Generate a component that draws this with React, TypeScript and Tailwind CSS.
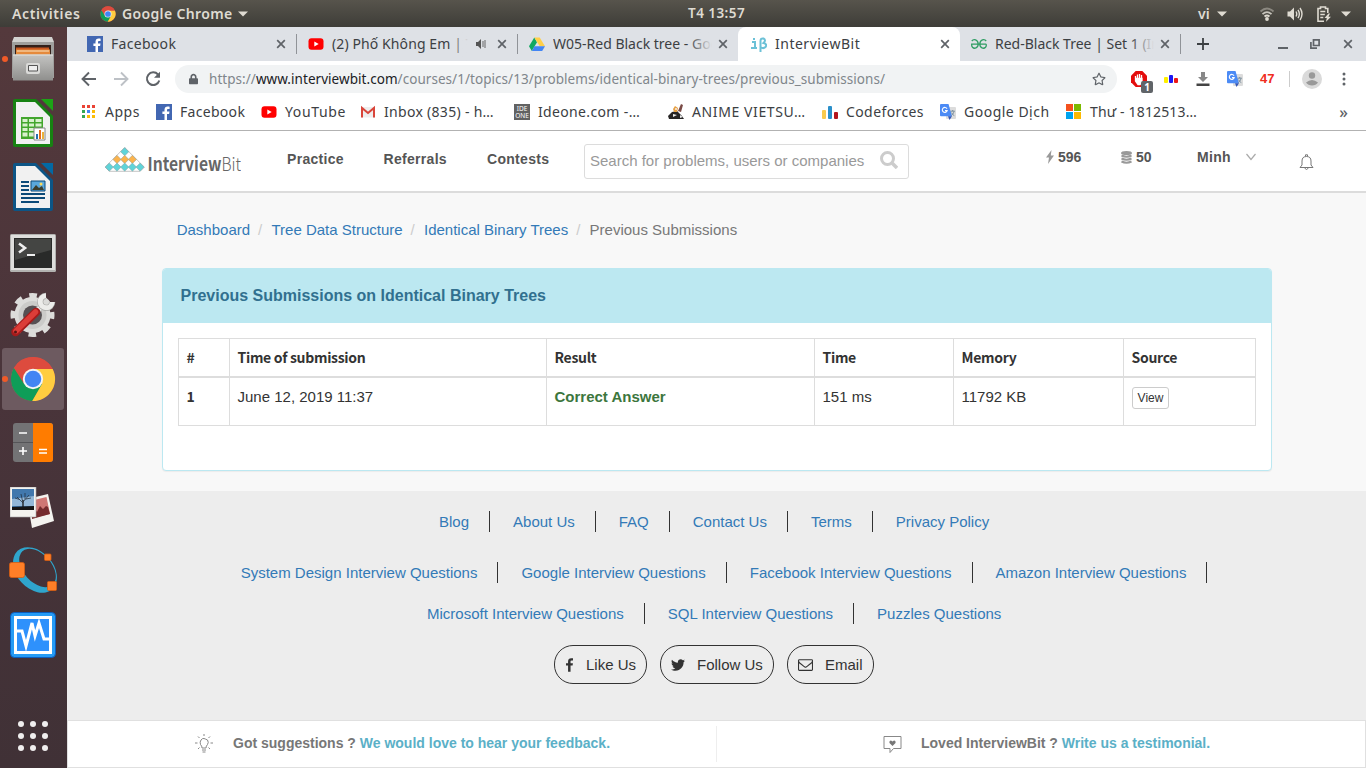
import React from "react";
import { FaTwitter, FaRegStar, FaLock } from "react-icons/fa";

const ui = "font-['Noto_Sans','Open_Sans',sans-serif]";

function Chrome({ className }: { className: string }) {
  return (
    <svg viewBox="0 0 48 48" className={className}>
      <circle cx="24" cy="24" r="23" fill="#dd4b3e" />
      <path d="M24 24 L4.1 12.5 A23 23 0 0 0 23.2 47 L34 29.5 Z" fill="#0f9d58" />
      <path d="M24 13.5 L44.5 13.5 A23 23 0 0 1 23.2 47 L33.5 29 Z" fill="#ffcd40" />
      <path d="M4.1 12.5 L14.6 29 L15 19 L24 13.5 L44.4 13.5 A23 23 0 0 0 4.1 12.5Z" fill="#dd4b3e" />
      <circle cx="24" cy="24" r="10.6" fill="#f4f4f4" />
      <circle cx="24" cy="24" r="8.6" fill="#4285f4" />
    </svg>
  );
}

function Facebook() {
  return (
    <svg viewBox="0 0 16 16" className="size-4 shrink-0">
      <path d="M0 0H16V16H0Z" fill="#4267b2" />
      <path d="M11 16V10h2.1l.4-2.4H11V6.2c0-.8.3-1.2 1.3-1.2h1.3V2.7c-.4-.1-1-.2-1.9-.2-2 0-3.2 1.2-3.2 3.3v1.8H6.4V10h2.1v6Z" fill="#fff" />
    </svg>
  );
}

function YouTube() {
  return (
    <svg viewBox="0 0 16 16" className="size-4 shrink-0">
      <rect x="0.5" y="2.2" width="15" height="11.6" rx="3" fill="#f00" />
      <path d="M6.3 5.5v5L10.7 8Z" fill="#fff" />
    </svg>
  );
}

function Drive() {
  return (
    <svg viewBox="0 0 16 16" className="size-4 shrink-0">
      <path d="M5.3 1.5 0 10.3 2.8 15 8 6.2Z" fill="#11a861" />
      <path d="M5.3 1.5h5.4L16 10.3h-5.3Z" fill="#ffcf48" />
      <path d="M5.5 10.3H16L13.2 15H2.8Z" fill="#4285f4" />
    </svg>
  );
}

function Geeks() {
  return (
    <svg viewBox="0 0 16 16" className="size-4 shrink-0" fill="none" stroke="#2f9d63" strokeWidth="1.3">
      <path d="M.8 5C2.500 2.800 7 3.300 7.200 8c0 4.300-4 5.100-5.700 3.300-.9-1-.9-2-.8-3.100H15.300M15.200 5C13.500 2.800 9 3.300 8.800 8c0 4.300 4 5.100 5.700 3.300.9-1 .9-2 .8-3.100" />
    </svg>
  );
}

function Translate() {
  return (
    <svg viewBox="0 0 16 16" className="size-4 shrink-0">
      <rect x="6" y="3" width="10" height="12" rx="1" fill="#dcdcdc" />
      <path d="M1 0H8.500L12 12.300H1A1 1 0 0 1 0 11.300V1A1 1 0 0 1 1 0Z" fill="#4c8bf5" />
      <path d="M8 12.300h4L9.500 16Z" fill="#3357b8" />
      <path d="M7 4.700A2.500 2.500 0 1 0 7.200 6.600H5" fill="none" stroke="#fff" strokeWidth="1.100" />
      <path d="M10.600 7.200h4.200M12.700 6v1M14 7.500c-.5 2-1.500 3-2.600 4M11.700 8.600c.6 1.500 1.500 2.500 2.600 3" fill="none" stroke="#6e8494" strokeWidth=".9" />
    </svg>
  );
}

function Cross({ className = "text-[#5f6368]" }: { className?: string }) {
  return (
    <svg viewBox="0 0 10 10" className={`size-[10px] shrink-0 ${className}`}>
      <path d="M1.200 1.200 8.800 8.800M8.800 1.200 1.200 8.800" stroke="currentColor" strokeWidth="1.700" />
    </svg>
  );
}

function Caret() {
  return (
    <svg viewBox="0 0 10 6" className="h-[6px] w-[10px] shrink-0">
      <path d="M0 .5H10L5 5.500Z" fill="#dfdbd2" />
    </svg>
  );
}

function TopBar() {
  return (
    <header className={`flex h-[27px] items-center bg-linear-to-b from-[#57544c] to-[#3e3d38] text-[14px] leading-[27px] font-semibold whitespace-nowrap text-[#dfdbd2] ${ui}`}>
      <div className="w-[100px] pl-3 tracking-[0.6px]">Activities</div>
      <Chrome className="size-4" />
      <div className="w-[122px] pl-[6px] tracking-[0.35px]">Google Chrome</div>
      <Caret />
      <div className="w-[950px] pl-[440px] text-[13.500px] tracking-[0.45px]">T4 13:57</div>
      <div className="w-[19px]">vi</div>
      <Caret />
      <svg viewBox="0 0 16 16" className="ml-8 size-4" fill="none" strokeWidth="1.800">
        <path d="M1.500 5.500Q8-.5 14.500 5.500" stroke="#8b8880" />
        <path d="M3.500 8.200Q8 4 12.500 8.200" stroke="#c8c5bd" />
        <path d="M5.500 10.500Q8 8.500 10.500 10.500" stroke="#dfdbd2" />
        <circle cx="8" cy="13" r="1.900" fill="#dfdbd2" />
      </svg>
      <svg viewBox="0 0 16 16" className="ml-[12px] size-4" fill="none" stroke="#dfdbd2" strokeWidth="1.400">
        <path d="M.5 5.500H3L7 1.500v13L3 10.500H.500Z" fill="#dfdbd2" stroke="none" />
        <path d="M9 5.500Q10.500 8 9 10.500M11 3.800Q13.700 8 11 12.200M13 2Q17 8 13 14" />
      </svg>
      <svg viewBox="0 0 16 16" className="ml-[13px] size-4" fill="none" stroke="#dfdbd2" strokeWidth="1.600">
        <path d="M11.800 7V2.500H9.500V1h-5v1.500H2v12.700h6M4.300 5.500h5M4.300 8.500h4.500M4.300 11.500h3" />
        <path d="M12.500 7.500 8.500 12h2.300l-.8 3.700 5-5h-2.500l1.500-3.200Z" fill="#dfdbd2" stroke="none" />
      </svg>
      <div className="ml-[9px]"><Caret /></div>
    </header>
  );
}

function DocIcon({ dark, light, sheet }: { dark: string; light: string; sheet?: boolean }) {
  return (
    <svg viewBox="0 0 40 48" className="h-12 w-10">
      <path d="M2 0H23L40 17V46a2 2 0 0 1-2 2H2a2 2 0 0 1-2-2V2A2 2 0 0 1 2 0Z" fill={dark} />
      <path d="M28 0H40V12Z" fill={light} />
      <path d="M3 3H22L37 18V45H3Z" fill="#f1f1f1" />
      {sheet ? (
        <>
          <path d="M8 18H30V40H8Z" fill="#43a62d" />
          <path d="M9.500 20h5v3h-5zM16 20h5v3h-5zM22.500 20h6v3h-6zM9.500 24.500h5v3h-5zM16 24.500h5v3h-5zM22.500 24.500h6v3h-6zM9.500 29h5v3h-5zM16 29h5v3h-5zM9.500 33.500h5v4h-5zM16 33.500h5v4h-5z" fill="#d8f1cd" />
          <path d="M21 29H32V41H21Z" fill="#fff" stroke="#888" />
          <path d="M23 35h2v5h-2z" fill="#2571b0" />
          <path d="M26 31h2v9h-2z" fill="#e46c1d" />
          <path d="M29 33h2v7h-2z" fill="#eab13b" />
        </>
      ) : (
        <>
          <path d="M8 18h8v2H8zM8 22h8v2H8zM8 26h8v2H8zM8 30h24v2H8zM8 34h24v2H8zM8 38h18v2H8z" fill="#0c4a78" />
          <path d="M18 18H32V28H18Z" fill="#5aa8dc" stroke="#0c4a78" />
          <path d="M19 27l4-5 3 3 3-2 2 4Z" fill="#3c3d2b" />
          <circle cx="28" cy="21" r="1.500" fill="#fcd95a" />
        </>
      )}
    </svg>
  );
}

function Slot({ children, dot, active }: { children: React.ReactNode; dot?: boolean; active?: boolean }) {
  return (
    <div className="relative flex h-16 items-center justify-center">
      {active && <div className="absolute inset-x-[2px] inset-y-[1px] rounded-[3px] bg-[#6d5a60]" />}
      {dot && <div className="absolute left-[2px] size-[6px] rounded-full bg-[#f05a28]" />}
      <div className="relative">{children}</div>
    </div>
  );
}

function Dock() {
  return (
    <aside className="flex h-[741px] w-[67px] shrink-0 flex-col bg-linear-to-b from-[#54393c] via-[#49343a] to-[#403136] pr-px">
      <Slot dot>
        <svg viewBox="0 0 42 44" className="h-11 w-[42px]">
          <defs>
            <linearGradient id="drawer" x1="0" y1="0" x2="0" y2="1"><stop offset="0" stopColor="#c4c4c2" /><stop offset="1" stopColor="#8f8f8d" /></linearGradient>
          </defs>
          <path d="M2 0H40L42 5V40H0V5Z" fill="#d2d2d0" />
          <path d="M0 5H42V41H0Z" fill="#9f9f9d" />
          <path d="M3 8H39V19H3Z" fill="#33201a" />
          <path d="M4 10.500H37V18H4Z" fill="#c9571f" />
          <path d="M4 12.500H38V18H4Z" fill="#e58a3c" />
          <path d="M5 14H37" stroke="#fbe3c0" strokeWidth="1" />
          <path d="M1 17.500H41V43.500H1Z" fill="url(#drawer)" />
          <path d="M1 18H41" stroke="#e2e2e0" />
          <rect x="14" y="26" width="14" height="11" rx="2" fill="#dadad8" />
          <path d="M16.500 28.500H25.500V34H16.500Z" fill="#eee" stroke="#555" />
        </svg>
      </Slot>
      <Slot><DocIcon dark="#178212" light="#1da316" sheet /></Slot>
      <Slot><DocIcon dark="#0c5586" light="#0369a3" /></Slot>
      <Slot>
        <svg viewBox="0 0 46 38" className="mt-1 h-[38px] w-[46px]">
          <rect width="46" height="38" rx="1.500" fill="#b2b2b0" />
          <path d="M1 1H45V36H1Z" fill="#dededc" />
          <path d="M4 4H42V34H4Z" fill="#292a29" />
          <path d="M5 5H41V16L5 26Z" fill="#444543" />
          <path d="M9 9.500 15 14 9 18.500" fill="none" stroke="#eee" strokeWidth="2.600" />
          <path d="M17 21h8" stroke="#eee" strokeWidth="2" />
        </svg>
      </Slot>
      <Slot>
        <svg viewBox="0 0 46 46" className="size-[46px]">
          <circle cx="22.500" cy="23" r="18" fill="#dcdcda" />
          <circle cx="22.500" cy="23" r="19" fill="none" stroke="#dcdcda" strokeWidth="6" strokeDasharray="7.460 7.460" strokeDashoffset="3.730" />
          <circle cx="22.500" cy="23" r="14" fill="#cbcbc9" />
          <circle cx="22.500" cy="23" r="9.500" fill="#565053" />
          <path d="M24 22 33 13" stroke="#c2c2c0" strokeWidth="6" />
          <path d="M24 22 33 13" stroke="#ececea" strokeWidth="4.500" />
          <path d="M36 3.800A6 6 0 1 0 42.200 10" fill="none" stroke="#a5a5a3" strokeWidth="6.200" />
          <path d="M36 3.800A6 6 0 1 0 42.200 10" fill="none" stroke="#ececea" strokeWidth="5" />
          <path d="M5.500 40 26 20" stroke="#a61b1b" strokeWidth="8.500" strokeLinecap="round" />
          <path d="M6 39 25.500 20" stroke="#dc3d38" strokeWidth="5.500" strokeLinecap="round" />
          <circle cx="5.500" cy="40" r="1.500" fill="#551414" />
        </svg>
      </Slot>
      <Slot active dot><Chrome className="size-[46px]" /></Slot>
      <Slot>
        <svg viewBox="0 0 40 40" className="size-10">
          <rect width="40" height="39" rx="3" fill="#737375" />
          <path d="M20 0H37a3 3 0 0 1 3 3V36a3 3 0 0 1-3 3H20Z" fill="#ff7c00" />
          <path d="M0 19.500H20" stroke="#555558" />
          <path d="M6 10h8M6 28h8M10 24v8M26 26.500h8M26 30h8" stroke="#fff" strokeWidth="1.600" />
        </svg>
      </Slot>
      <Slot>
        <svg viewBox="0 0 46 42" className="mt-[2px] h-[42px] w-[46px]">
          <path d="M17 12 38 7 44 34 22 41Z" fill="#f4f3ef" />
          <path d="M20 14 36.500 10 40 27 23 31Z" fill="#cf7774" />
          <path d="M22 26l3-4 2 3 3-6 3 3 3-3 2 1 2 7-18 5Z" fill="#752b2d" />
          <path d="M0 0H26V30H0Z" fill="#f4f3ef" stroke="#aaa" strokeWidth=".6" />
          <path d="M2 2H24V23H2Z" fill="#4178ad" />
          <path d="M2 12 24 9V19H2Z" fill="#93b8d8" />
          <path d="M2 20 24 19V23H2Z" fill="#151515" />
          <path d="M13 21V13" stroke="#181818" strokeWidth="1.300" />
          <path d="M13 16 7 10M13 15 19 8M12.500 14 11 7M9.500 12.500 5 11M16 12 21 11M15 12.500 15 6" stroke="#1f2a36" strokeWidth=".7" fill="none" />
        </svg>
      </Slot>
      <Slot>
        <svg viewBox="0 0 48 50" className="h-[50px] w-12">
          <path fillRule="evenodd" d="M8.600 4.700A26 19 48 0 1 43.400 43.300 26 19 48 0 1 8.600 4.700ZM13.400 5.300A22.500 14 48 0 1 43.600 38.700 22.500 14 48 0 1 13.400 5.300Z" fill="#2fa5cc" />
          <g fill="#ff7f27" stroke="#d75d12" strokeWidth=".8">
            <rect x=".5" y="16.500" width="15" height="15" rx="2" />
            <rect x="35.500" y="8" width="6.500" height="6.500" rx="1" />
            <rect x="38.500" y="35.500" width="9" height="9" rx="1" />
          </g>
        </svg>
      </Slot>
      <Slot>
        <svg viewBox="0 0 46 46" className="size-[46px]">
          <rect x=".5" y=".5" width="45" height="45" rx="4" fill="#259bf5" stroke="#0b5cbc" />
          <path d="M5.500 5.500H40.500V40.500H5.500Z" fill="#2e91fc" stroke="#fff" strokeWidth="3" />
          <path d="M7 19H12L16 34 22 11 25 24 29 11 34 27H39" fill="none" stroke="#fff" strokeWidth="3" />
        </svg>
      </Slot>
      <div className="mt-auto">
        <Slot>
          <div className="grid grid-cols-3 gap-[6px]">
            {Array.from({ length: 9 }, (_, i) => <div key={i} className="size-[6px] rounded-full bg-[#f0eeee]" />)}
          </div>
        </Slot>
      </div>
    </aside>
  );
}

function Tab({ icon, title, text, sep, sound, fade }: { icon: React.ReactNode; title: string; text: string; sep?: boolean; sound?: boolean; fade?: boolean }) {
  return (
    <div className="flex h-[34px] w-[221px] shrink-0 items-center pl-3">
      {icon}
      <div className={`relative ml-2 shrink-0 overflow-hidden ${sound ? "w-[136px]" : "w-[159px]"}`}>
        <span className={text}>{title}</span>
        {fade && <div className={`absolute inset-y-0 right-0 bg-linear-to-r from-transparent to-[#dee1e6] ${sound ? "w-4" : "w-6"}`} />}
      </div>
      {sound && <svg viewBox="0 0 10 10" className="mr-[5px] ml-[8px] size-[10px] shrink-0"><path d="M0 3h2l3-3v10L2 7H0Z" fill="#555" /><path d="M7 2v6M9 1v8" stroke="#666" /></svg>}
      <div className="flex w-[27px] shrink-0 items-center justify-between pl-[6px]">
        <Cross />
        {sep && <div className="h-5 w-px bg-[#909398]" />}
      </div>
    </div>
  );
}

function TabStrip() {
  return (
    <div className="flex h-[34px] items-center bg-[#dee1e6] pl-2 text-[14px] leading-[34px] whitespace-nowrap text-[#3c4043]">
      <Tab icon={<Facebook />} title="Facebook" text="tracking-[0.3px]" sep />
      <Tab icon={<YouTube />} title="(2) Phố Không Em | Thái" text="tracking-[0.1px]" sep sound fade />
      <Tab icon={<Drive />} title="W05-Red Black tree - Google" text="tracking-[0px]" fade />
      <div className="relative h-full w-[222px] rounded-t-lg bg-white pl-px">
        <Tab icon={<svg viewBox="0 0 16 16" className="size-4 shrink-0" fill="none" stroke="#6cc1d7" strokeWidth="2"><path d="M1 6h3v5.500M0 12h6M3 2v2M9.500 16V5q0-3 3-2.500 3 1.500 0 4.500 4 1 2 4-2 2-4.500.5" /></svg>} title="InterviewBit" text="tracking-[0.5px]" />
      </div>
      <div className="-ml-px"><Tab icon={<Geeks />} title="Red-Black Tree | Set 1 (Introduction)" text="tracking-[0px]" sep fade /></div>
      <svg viewBox="0 0 12 12" className="ml-[17px] size-3"><path d="M6 0V12M0 6H12" stroke="#3c4043" strokeWidth="1.800" /></svg>
      <div className="ml-auto flex items-center pr-[13px] text-[#5f6368]">
        <div className="mt-[8px] h-[2px] w-[10px] bg-[#5f6368]" />
        <svg viewBox="0 0 10 10" className="ml-[22px] size-[10px]" fill="none" stroke="currentColor" strokeWidth="1.700"><path d="M3.500.900H9.100V6.500H3.500ZM.900 3V9.100H7" /></svg>
        <Cross className="ml-[23px] text-[#5f6368]" />
      </div>
    </div>
  );
}

function Toolbar() {
  return (
    <div className="flex h-[35px] items-center pl-[14px]">
      <svg viewBox="0 0 16 16" className="size-4" fill="none" stroke="#5f6368" strokeWidth="1.900"><path d="M15 8H2M8 1.500 1.500 8 8 14.500" /></svg>
      <svg viewBox="0 0 16 16" className="ml-4 size-4" fill="none" stroke="#bdc1c6" strokeWidth="1.900"><path d="M1 8H14M8 1.500 14.500 8 8 14.500" /></svg>
      <svg viewBox="0 0 16 16" className="ml-4 size-4" fill="none" stroke="#5f6368" strokeWidth="2"><path d="M13 3.500A6.300 6.300 0 1 0 14.300 9.500" /><path d="M9 6.800H15V.800Z" fill="#5f6368" stroke="none" /></svg>
      <div className="ml-[14px] flex h-7 w-[942px] items-center rounded-full bg-[#f1f3f4] pr-[11px] pl-[14px] text-[13.500px] leading-7 whitespace-nowrap text-[#80868b]">
        <FaLock className="mr-[11px] h-3 w-[9px] text-[#5f6368]" />
        <span className="tracking-[0.05px]">https://<span className="text-[#202124]">www.interviewbit.com</span>/courses/1/topics/13/problems/identical-binary-trees/previous_submissions/</span>
        <FaRegStar className="ml-auto size-[14px] text-[#5f6368]" />
      </div>
      <div className="relative ml-[14px] size-4">
        <svg viewBox="0 0 16 16" className="size-4"><path d="M4.700 0h6.600L16 4.700v6.600L11.300 16H4.700L0 11.300V4.700Z" fill="#e40d0d" /><path d="M4.500 8V5M6.500 8V3.500M8.500 8V3M10.500 8V4M4.500 7.500H11V11L9 13.500H7L4.500 10Z" stroke="#fff" strokeWidth="1.300" fill="#fff" /></svg>
        <div className="absolute top-[10px] left-[10px] flex h-3 w-3 items-center justify-center rounded-[2px] bg-[#606468] text-[10px] leading-3 font-bold text-white">1</div>
      </div>
      <svg viewBox="0 0 16 16" className="ml-4 size-4"><rect x="1" y="6" width="4" height="6" rx="1" fill="#fff000" /><rect x="6" y="4" width="4" height="8" rx="1" fill="#1b18f5" /><rect x="11" y="7" width="4" height="5" rx="1" fill="#ed1818" /></svg>
      <svg viewBox="0 0 16 16" className="ml-4 size-4"><path d="M6 1h4v5h3L8 11 3 6h3Z" fill="#888" /><path d="M1.500 12.500h13v2.500h-13Z" fill="#444" /></svg>
      <div className="ml-4"><Translate /></div>
      <div className="ml-[17px] w-[15px] font-['Liberation_Sans',sans-serif] text-[13px] leading-none font-bold text-[#f02d20]">47</div>
      <div className="ml-[14px] h-4 w-px bg-[#ccc]" />
      <svg viewBox="0 0 20 20" className="ml-[12px] size-5"><circle cx="10" cy="10" r="10" fill="#dadada" /><circle cx="10" cy="6.500" r="3.200" fill="#999" /><path d="M4 13.500q6-5 12 0-2 3-6 3t-6-3Z" fill="#999" /></svg>
      <svg viewBox="0 0 4 16" className="ml-[20px] h-4 w-1" fill="#5f6368"><circle cx="2" cy="3" r="1.500" /><circle cx="2" cy="8" r="1.500" /><circle cx="2" cy="13" r="1.500" /></svg>
    </div>
  );
}

function Mark({ w, icon, children, text = "" }: { w: string; icon: React.ReactNode; children: string; text?: string }) {
  return (
    <div className={`flex shrink-0 items-center ${w}`}>
      <div className="flex size-4 shrink-0 items-center justify-center">{icon}</div>
      <span className={`ml-2 ${text}`}>{children}</span>
    </div>
  );
}

const dots = ["#ea4335", "#ea4335", "#ea4335", "#34a853", "#4285f4", "#fbbc05", "#34a853", "#fbbc05", "#fbbc05"];

function Bookmarks() {
  return (
    <div className="flex h-[35px] items-center border-b border-[#b2b2b2] pb-[3px] pl-[14px] text-[14px] leading-none whitespace-nowrap text-[#3c4043]">
      <Mark w="w-[75px]" text="tracking-[0.5px]" icon={<svg viewBox="0 0 14 14" className="size-[14px]">{dots.map((c, i) => <rect key={i} x={(i % 3) * 5} y={Math.floor(i / 3) * 5} width="3" height="3" fill={c} />)}</svg>}>Apps</Mark>
      <Mark w="w-[105px]" icon={<Facebook />} text="tracking-[0.3px]">Facebook</Mark>
      <Mark w="w-[99px]" icon={<YouTube />} text="tracking-[0.65px]">YouTube</Mark>
      <Mark w="w-[154px]" text="tracking-[0.3px]" icon={<svg viewBox="0 0 16 16" className="size-4"><path d="M1 3H15V13.500H1Z" fill="#eee" /><path d="M2 13.500V4L8 9 14 4V13.500" fill="none" stroke="#d9453a" strokeWidth="2" /></svg>}>Inbox (835) - h…</Mark>
      <Mark w="w-[154px]" text="tracking-[0.35px]" icon={<div className="flex size-4 flex-col items-center justify-center overflow-hidden bg-[#626262] text-[6.500px] leading-[7px] text-white"><span>IDE</span><span>ONE</span></div>}>Ideone.com -…</Mark>
      <Mark w="w-[154px]" text="tracking-[0.6px]" icon={<svg viewBox="0 0 16 16" className="size-4"><path d="M0 12 4 8 9 7 14 12 16 15H1Z" fill="#272525" /><path d="M5 5 7 2 10 4 9 8H6Z" fill="#e5a044" /><path d="M10 7 13 0 15 1 13 8Z" fill="#7a4b46" /><path d="M5 10l4 1-4 2ZM12 11l3 2-3 1Z" fill="#eee" /><path d="M7 4h2v2H7Z" fill="#f5d9bd" /></svg>}>ANIME VIETSU…</Mark>
      <Mark w="w-[118px]" text="tracking-[0.4px]" icon={<svg viewBox="0 0 16 16" className="size-4"><rect y="6" width="4" height="9" rx="1" fill="#f8ca4d" /><rect x="6" y="2" width="4" height="13" rx="1" fill="#2a8fca" /><rect x="12" y="8" width="4" height="7" rx="1" fill="#b3161d" /></svg>}>Codeforces</Mark>
      <Mark w="w-[125px]" text="tracking-[0.5px]" icon={<Translate />}>Google Dịch</Mark>
      <Mark w="w-[151px]" text="ml-[9px] tracking-[0.15px]" icon={<div className="grid size-[15px] grid-cols-2 gap-px"><i className="bg-[#f4511e]" /><i className="bg-[#7cb900]" /><i className="bg-[#00a3ee]" /><i className="bg-[#fdb900]" /></div>}>Thư - 1812513…</Mark>
      <span className="ml-auto pr-[18px] text-[16px] font-medium text-[#5f6368]">»</span>
    </div>
  );
}

const diamonds: [number, number, string][] = [
  [19.700, 4.700, "#5fd4d9"],
  [12, 12.400, "#fbb34c"], [19.700, 12.400, "#fbb34c"], [27.400, 12.400, "#fbb34c"],
  [4.300, 20.100, "#5fd4d9"], [12, 20.100, "#5fd4d9"], [19.700, 20.100, "#5fd4d9"], [27.400, 20.100, "#5fd4d9"], [35.100, 20.100, "#5fd4d9"],
];

function SiteHeader() {
  return (
    <div className="flex h-[62px] items-start border-b-2 border-[#dcdcdc] bg-white text-[14px] leading-4 font-bold whitespace-nowrap text-[#555]">
      <svg viewBox="0 0 136 26" className="mt-[16px] ml-[38px] h-[26px] w-[136px]">
        <path d="M19.700.500 39.300 20.100 35.100 24.300H4.300L.100 20.100Z" fill="#fff" stroke="#b5b5b5" strokeWidth=".8" />
        {diamonds.map(([x, y, c]) => <path key={`${x}-${y}`} d={`M${x} ${y - 4.100}l4.100 4.100-4.100 4.100-4.100-4.100Z`} fill={c} stroke="#8a9c9c" strokeWidth=".5" />)}
        <text x="42.500" y="23.500" fontSize="18.500" fill="#666" fontFamily="Noto Sans CJK SC, sans-serif" textLength="93.500" lengthAdjust="spacingAndGlyphs">
          <tspan fontWeight="700">Interview</tspan><tspan fontWeight="300">Bit</tspan>
        </text>
      </svg>
      <nav className="flex pt-5 pl-[46px] tracking-[0.3px]">
        <a className="w-[96.500px]">Practice</a>
        <a className="w-[103.500px]">Referrals</a>
        <a className="w-[97px]">Contests</a>
      </nav>
      <div className="mt-[13px] flex h-[35px] w-[325px] items-center rounded-[3px] border border-[#dcdcdc] pl-[5px] text-[15px] font-normal text-[#999]">
        <span className="w-[290px] pb-[2px]">Search for problems, users or companies</span>
        <svg viewBox="0 0 18 18" className="-mt-1 size-[18px]" fill="none" stroke="#ccc"><circle cx="7.500" cy="7.500" r="6" strokeWidth="3" /><path d="M12 12 17 17" strokeWidth="3.500" /></svg>
      </div>
      <div className="mt-[18px] ml-[137px] flex w-[75px] items-center">
        <svg viewBox="0 0 8 14" className="mr-1 h-[14px] w-2"><path d="M5.500 0 0 7.500h3L2 14 8 5.500H4.800Z" fill="#999" /></svg>596
      </div>
      <div className="mt-[18px] flex w-[76px] items-center">
        <svg viewBox="0 0 11 13" className="mr-1 h-[13px] w-[11px]" fill="none" stroke="#999" strokeWidth="2"><ellipse cx="5.500" cy="2" rx="4.500" ry="1" /><path d="M.5 4.500q5 2.500 10 0M.5 7.500q5 2.500 10 0M.5 10.500q5 2.500 10 0" /></svg>50
      </div>
      <div className="mt-[18px] flex w-[102px] items-center tracking-[0.3px]">Minh
        <svg viewBox="0 0 10 8" className="ml-[15px] h-2 w-[10px]" fill="none" stroke="#aaa" strokeWidth="1.200"><path d="M.5 1 5 6.500 9.500 1" /></svg>
      </div>
      <svg viewBox="0 0 15 17" className="mt-[23px] h-[17px] w-[15px]" fill="none" stroke="#777"><path d="M1 13.500H14L12 11V7Q12 2.500 7.500 2.500T3 7v4ZM6.500 2V.800h2V2M5.500 14q2 3 4 0" /></svg>
    </div>
  );
}

function Submissions() {
  const th = "border border-b-2 border-[#ddd] px-[7.500px] text-left align-middle";
  const td = "border border-[#ddd] px-[7.500px] pt-[8px] align-top leading-[21px]";
  return (
    <section className="mt-[27px] ml-[95px] h-[203px] w-[1110px] overflow-hidden rounded-[4px] border border-[#bce8f1] bg-white shadow-[0_1px_1px_rgba(0,0,0,0.05)]">
      <h1 className="h-[54px] bg-[#bce8f1] pl-[17.500px] text-[16px] leading-[53px] font-bold text-[#31708f]">Previous Submissions on Identical Binary Trees</h1>
      <table className="mt-[15px] ml-[15px] w-[1078px] table-fixed border-collapse text-[15px] text-[#333]">
        <colgroup><col className="w-[51px]" /><col className="w-[317px]" /><col className="w-[268px]" /><col className="w-[139px]" /><col className="w-[170px]" /><col /></colgroup>
        <thead className="font-['Noto_Sans_CJK_SC',sans-serif] text-[14px] leading-5 tracking-[-0.3px]">
          <tr className="h-[38px]">{["#", "Time of submission", "Result", "Time", "Memory", "Source"].map((h) => <th key={h} className={th}>{h}</th>)}</tr>
        </thead>
        <tbody>
          <tr className="h-[49px]">
            <td className={`${td} font-['Noto_Sans_CJK_SC',sans-serif] text-[14px] font-bold`}>1</td>
            <td className={td}>June 12, 2019 11:37</td>
            <td className={`${td} font-bold text-[#3c763d]`}>Correct Answer</td>
            <td className={td}>151 ms</td>
            <td className={td}>11792 KB</td>
            <td className={td}><button className="mt-px ml-[0.500px] block h-[22px] w-[37px] rounded-[3px] border border-[#ccc] bg-white text-[12px] leading-5 text-[#333]">View</button></td>
          </tr>
        </tbody>
      </table>
    </section>
  );
}

function Links({ items, pl, mt, last }: { items: string[]; pl: string; mt: string; last?: boolean }) {
  return (
    <div className={`flex gap-[3px] ${pl} ${mt}`}>
      {items.map((t, i) => <a key={t} className={`h-[21px] px-[20px] leading-[21px] ${i < items.length - 1 || last ? "border-r border-[#333]" : ""}`}>{t}</a>)}
    </div>
  );
}

function Footer() {
  const pill = "flex h-[39px] items-center rounded-[19px] border border-[#333] leading-[39px] text-[#333]";
  return (
    <footer className="mt-[20px] h-[229px] bg-[#ededed] pt-[20px] text-[15px] whitespace-nowrap text-[#337ab7]">
      <Links pl="pl-[352px]" mt="" items={["Blog", "About Us", "FAQ", "Contact Us", "Terms", "Privacy Policy"]} />
      <Links pl="pl-[153.700px]" mt="mt-[30px]" last items={["System Design Interview Questions", "Google Interview Questions", "Facebook Interview Questions", "Amazon Interview Questions"]} />
      <Links pl="pl-[340px]" mt="mt-[20px]" items={["Microsoft Interview Questions", "SQL Interview Questions", "Puzzles Questions"]} />
      <div className="mt-[21px] flex gap-[13px] pl-[487px]">
        <a className={`${pill} w-[93px] pl-[11px]`}>
          <svg viewBox="95 0 864 1664" className="mr-[13px] h-[14px] w-[7px]"><path fill="currentColor" d="M959 12v264h-157q-86 0-116 36t-30 108v189h293l-39 296h-254v759H350V905H95V609h255V391q0-186 104-288.500T731 0q147 0 228 12z" /></svg>
          Like Us
        </a>
        <a className={`${pill} w-[114px] pl-[10px]`}><FaTwitter className="mr-[12px] size-[14px]" />Follow Us</a>
        <a className={`${pill} w-[87px] pl-[10px]`}>
          <svg viewBox="0 0 1792 1792" className="mr-[12px] size-[15px]"><path fill="currentColor" d="M1664 1504V736q-32 36-69 66-268 206-426 338-51 43-83 67t-86.500 48.500T897 1280h-2q-48 0-102.500-24.500T706 1207t-83-67Q465 1008 197 802q-37-30-69-66v768q0 13 9.500 22.500t22.500 9.500h1472q13 0 22.500-9.500t9.500-22.500zm0-1051v-24.500l-.5-13-3-12.500-5.500-9-9-7.500-14-2.500H160q-13 0-22.500 9.500T128 416q0 168 147 284 193 152 401 317 6 5 35 29.500t46 37.500 44.500 31.500T852 1143t43 9h2q20 0 43-9t50.500-27.500T1035 1084t46-37.500 35-29.500q208-165 401-317 54-43 100.500-115.500T1664 453zm128-37v1088q0 66-47 113t-113 47H160q-66 0-113-47T0 1504V416q0-66 47-113t113-47h1472q66 0 113 47t47 113z" /></svg>
          Email
        </a>
      </div>
    </footer>
  );
}

function Feedback() {
  return (
    <div className="flex h-12 items-center border border-[#e0e0e0] bg-white text-[14px] leading-[46px] font-bold whitespace-nowrap text-[#777]">
      <div className="flex h-full w-[648px] items-center pl-[127px]">
        <svg viewBox="0 0 18 20" className="mr-[20px] h-5 w-[18px]" fill="none" stroke="#888"><path d="M7 14q0-2-1.500-3.500Q4.500 8 6 6t3-1.500T12.500 6q1.500 2.500 0 4.500Q11 12 11 14ZM7 16h4M7.500 18h3M9 0v2M3 2.500l1.500 1.500M15 2.500 13.500 4M0 9h2.500M15.500 9H18M3 15l1.500-1.500M15 15l-1.500-1.500" /></svg>
        <span className="pb-[2px]">Got suggestions ? <a className="text-[#5bb0c7]">We would love to hear your feedback.</a></span>
      </div>
      <div className="h-9 w-px bg-[#eee]" />
      <div className="flex h-full items-center pl-[166px]">
        <svg viewBox="0 0 19 20" className="mr-[19px] h-5 w-[19px]" fill="none" stroke="#888"><path d="M1 2.500H18V14.500H10.500L7 18.500V14.500H1Z" /><path d="M9.500 12 6.500 9Q6 6.500 8 6.500L9.500 7.500 11 6.500Q13 6.500 12.500 9Z" fill="#777" stroke="none" /></svg>
        <span className="pb-[2px]">Loved InterviewBit ? <a className="text-[#5bb0c7]">Write us a testimonial.</a></span>
      </div>
    </div>
  );
}

export default function App() {
  return (
    <div className="h-[768px] w-[1366px] overflow-hidden bg-white font-['Liberation_Sans',Arial,sans-serif]">
      <TopBar />
      <div className="flex">
        <Dock />
        <main className="w-[1299px] bg-[#f8f8f8]">
          <div className={`bg-white ${ui}`}><TabStrip /><Toolbar /><Bookmarks /></div>
          <SiteHeader />
          <nav className="flex gap-2 pt-[26px] pl-[109.700px] text-[15px] leading-[22px] whitespace-nowrap text-[#337ab7]">
            <a>Dashboard</a><span className="mr-[1.200px] text-[#ccc]">/</span>
            <a>Tree Data Structure</a><span className="mr-[1.200px] text-[#ccc]">/</span>
            <a>Identical Binary Trees</a><span className="mr-[1.200px] text-[#ccc]">/</span>
            <span className="text-[#777]">Previous Submissions</span>
          </nav>
          <Submissions />
          <Footer />
          <Feedback />
        </main>
      </div>
    </div>
  );
}
